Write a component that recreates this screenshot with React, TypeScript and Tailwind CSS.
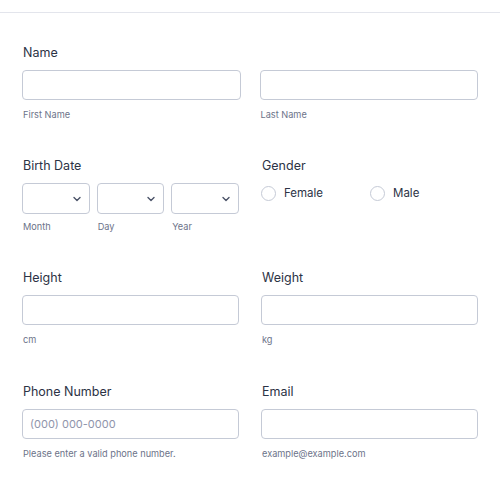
import React from "react";

const label = "text-[12.5px] leading-4 text-[#2c3345] pl-px";
const sub = "text-[9.2px] leading-3 text-[#6c7389] pl-px";
const box =
  "block w-full h-[30px] rounded-[4px] border border-[#c5cad6] bg-white px-[7px] text-[11px] text-[#2c3345] outline-none placeholder:text-[#8f94ab]";

function Chevron() {
  return (
    <svg width="10" height="10" viewBox="0 0 10 10" fill="none" className="text-[#4b5368]">
      <path d="M2 3.5 5 6.5 8 3.5" stroke="currentColor" strokeWidth="1.4" strokeLinecap="round" strokeLinejoin="round" />
    </svg>
  );
}

function Select({ caption }: { caption: string }) {
  return (
    <div>
      <div className="flex h-[31px] items-center justify-end rounded-[4px] border border-[#c5cad6] bg-white pr-[7px]">
        <Chevron />
      </div>
      <div className={`${sub} mt-[7px]`}>{caption}</div>
    </div>
  );
}

function Radio({ text, className = "" }: { text: string; className?: string }) {
  return (
    <label className={`flex items-center gap-2 ${className}`}>
      <span className="h-[15px] w-[15px] rounded-full border border-[#c5cad6] bg-white" />
      <span className="text-[11.5px] leading-4 text-[#2c3345]">{text}</span>
    </label>
  );
}

function Field({ title, caption, placeholder }: { title: string; caption: string; placeholder?: string }) {
  return (
    <div>
      <div className={label}>{title}</div>
      <input className={`${box} mt-[9px]`} placeholder={placeholder} />
      <div className={`${sub} mt-[9px]`}>{caption}</div>
    </div>
  );
}

export default function App() {
  return (
    <div className="h-[484px] w-[500px] overflow-hidden bg-white font-['Inter',sans-serif]">
      <div className="h-[13px] border-b border-[#e3e5ec]" />
      <div className="px-[22px]">
        {/* name */}
        <div className="pt-[32px]">
          <div className={label}>Name</div>
          <div className="mt-[9px] grid grid-cols-2 gap-[19px]">
            <div>
              <input className={box} />
              <div className={`${sub} mt-[9px]`}>First Name</div>
            </div>
            <div>
              <input className={box} />
              <div className={`${sub} mt-[9px]`}>Last Name</div>
            </div>
          </div>
        </div>

        {/* birth date + gender */}
        <div className="grid grid-cols-2 gap-[22px] pt-[37px]">
          <div>
            <div className={label}>Birth Date</div>
            <div className="mt-[9px] grid grid-cols-3 gap-[7px]">
              <Select caption="Month" />
              <Select caption="Day" />
              <Select caption="Year" />
            </div>
          </div>
          <div>
            <div className={label}>Gender</div>
            <div className="mt-[11px] flex">
              <Radio text="Female" className="w-[109px]" />
              <Radio text="Male" />
            </div>
          </div>
        </div>

        <div className="grid grid-cols-2 gap-[22px] pt-[37px]">
          <Field title="Height" caption="cm" />
          <Field title="Weight" caption="kg" />
        </div>

        <div className="grid grid-cols-2 gap-[22px] pt-[38px]">
          <Field title="Phone Number" caption="Please enter a valid phone number." placeholder="(000) 000-0000" />
          <Field title="Email" caption="example@example.com" />
        </div>
      </div>
    </div>
  );
}
